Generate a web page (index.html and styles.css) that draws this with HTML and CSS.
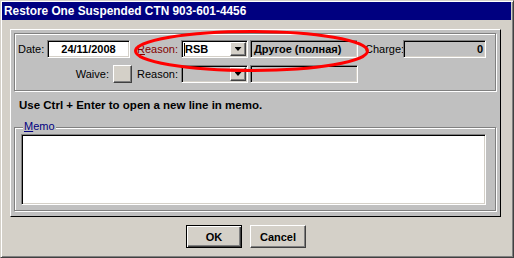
FILE: index.html
```html
<!DOCTYPE html>
<html lang="en">
<head>
    <meta charset="UTF-8">
    <title>Restore One Suspended CTN</title>
    <link rel="stylesheet" href="styles.css">
</head>
<body>
    <div class="window">
        <div class="titlebar">Restore One Suspended CTN 903-601-4456</div>

        <div class="client">
            <div class="panel">
                <div class="group">
                    <div class="row">
                        <span class="lbl lbl-date">Date:</span>
                        <div class="field field-date">24/11/2008</div>
                        <span class="lbl lbl-reason req"><u>R</u>eason:</span>
                        <div class="combo">
                            <span class="combo-text"><i class="caret"></i>RSB</span>
                            <span class="drop"></span>
                        </div>
                        <div class="field field-desc">Другое (полная)</div>
                        <span class="lbl lbl-charge">Charge:</span>
                        <div class="field field-charge">0</div>
                    </div>
                    <div class="row">
                        <span class="lbl lbl-waive">Waive:</span>
                        <span class="waive-btn"></span>
                        <span class="lbl lbl-reason2">Reason:</span>
                        <div class="combo combo-off">
                            <span class="combo-text"></span>
                            <span class="drop"></span>
                        </div>
                        <div class="field field-desc"></div>
                    </div>
                </div>

                <p class="hint">Use Ctrl + Enter to open a new line in memo.</p>

                <fieldset class="memo">
                    <legend><u>M</u>emo</legend>
                    <div class="memo-box"></div>
                </fieldset>
            </div>

            <div class="buttons">
                <button type="button" class="btn btn-default">OK</button>
                <button type="button" class="btn">Cancel</button>
            </div>
        </div>

        <!-- red mark drawn over the reason fields -->
        <svg class="mark" width="514" height="258" viewBox="0 0 514 258">
            <ellipse cx="250.5" cy="50" rx="116" ry="19.5" fill="none" stroke="#ff0000" stroke-width="3"/>
        </svg>
    </div>
</body>
</html>
```

FILE: styles.css
```css
body {
    margin: 0;
    font-family: "Liberation Sans", Arial, sans-serif;
    font-size: 11px;
    color: #000;
}

.window {
    position: relative;
    box-sizing: border-box;
    width: 514px;
    height: 258px;
    background-color: #d4d0c8;
    border: 1px solid;
    border-color: #d4d0c8 #404040 #404040 #d4d0c8;
    box-shadow: inset 1px 1px #fff, inset -1px -1px #808080;
    padding: 1px 2px 1px 1px;
}

.titlebar {
    height: 18px;
    line-height: 18px;
    background-color: #000080;
    color: #fff;
    font-weight: bold;
    font-size: 11.85px;
    padding-left: 2px;
    white-space: nowrap;
}

.client {
    padding: 9px 0 0 8px;
}

.panel {
    box-sizing: border-box;
    width: 491px;
    height: 188px;
    background-color: #c0c0c0;
    border: 1px solid;
    border-color: #fff #000 #000 #fff;
    padding: 3px 0 0 3px;
}

/* etched group frames */
.group {
    box-sizing: border-box;
    width: 482px;
    height: 58px;
    border: 1px solid #808080;
    box-shadow: inset 1px 1px #fff, 1px 1px #fff;
    padding: 6px 0 0 3px;
}

.row {
    display: flex;
    height: 18px;
}

.row + .row {
    margin-top: 7px;
}

.lbl {
    box-sizing: border-box;
    line-height: 18px;
    white-space: nowrap;
}

.lbl-date {
    width: 29px;
}

.lbl-reason {
    width: 51px;
    padding-left: 7px;
}

.req {
    color: #800000;
}

.lbl-charge {
    width: 45px;
    padding-left: 7px;
}

.lbl-waive {
    width: 95px;
    padding-right: 4px;
    text-align: right;
}

.lbl-reason2 {
    width: 49px;
    padding-left: 5px;
}

/* sunken edit boxes */
.field,
.combo,
.memo-box {
    box-sizing: border-box;
    border: 1px solid;
    border-color: #808080 #fff #fff #808080;
    box-shadow: inset 1px 1px #000, inset -1px -1px #d4d0c8;
}

.field {
    height: 18px;
    line-height: 16px;
    padding: 0 3px;
    font-weight: bold;
    white-space: nowrap;
    overflow: hidden;
}

.field-date {
    width: 83px;
    background-color: #fff;
    text-align: center;
}

.field-desc {
    width: 108px;
    margin-left: 2px;
}

.field-charge {
    width: 83px;
    text-align: right;
    padding-right: 2px;
}

.combo {
    display: flex;
    align-items: center;
    width: 67px;
    height: 18px;
    padding: 1px;
    background-color: #fff;
}

.combo-off {
    background-color: #c0c0c0;
}

.combo-text {
    display: flex;
    align-items: center;
    font-weight: bold;
    padding-left: 1px;
}

.caret {
    display: block;
    width: 1px;
    height: 13px;
    background-color: #000;
}

.drop {
    box-sizing: border-box;
    display: flex;
    align-items: center;
    justify-content: center;
    width: 16px;
    height: 14px;
    margin-left: auto;
    background-color: #d4d0c8;
    border: 1px solid;
    border-color: #fff #404040 #404040 #fff;
    box-shadow: inset -1px -1px #808080;
}

.drop::after {
    content: "";
    width: 7px;
    height: 4px;
    background-color: #000;
    clip-path: polygon(0 0, 100% 0, 50% 100%);
}

.waive-btn {
    box-sizing: border-box;
    width: 19px;
    height: 18px;
    background-color: #d4d0c8;
    border: 1px solid;
    border-color: #fff #404040 #404040 #fff;
    box-shadow: inset -1px -1px #808080;
}

.hint {
    margin: 8px 0 0 5px;
    font-weight: bold;
    font-size: 11.5px;
    line-height: 13px;
}

.memo {
    box-sizing: border-box;
    width: 482px;
    min-width: 0;
    margin: 9px 0 0;
    padding: 0 8px 5px 6px;
    border: 1px solid #808080;
    box-shadow: inset 1px 1px #fff, 1px 1px #fff;
}

.memo legend {
    margin-left: 2px;
    padding: 0 1px 3px;
    line-height: 10px;
    color: #000080;
    background-color: #c0c0c0;
}

.memo-box {
    width: 465px;
    height: 71px;
    background-color: #fff;
}

.buttons {
    display: flex;
    gap: 8px;
    margin-top: 8px;
    padding-left: 176px;
}

.btn {
    box-sizing: border-box;
    width: 56px;
    height: 23px;
    padding: 0;
    font-family: inherit;
    font-size: 11px;
    font-weight: bold;
    color: #000;
    background-color: #d4d0c8;
    border: 1px solid;
    border-color: #fff #404040 #404040 #fff;
    box-shadow: inset -1px -1px #808080;
}

.btn-default {
    border-color: #000;
    box-shadow: inset 1px 1px #fff, inset -1px -1px #404040, inset -2px -2px #808080;
}

.mark {
    position: absolute;
    top: 0;
    left: 0;
    pointer-events: none;
}
```
